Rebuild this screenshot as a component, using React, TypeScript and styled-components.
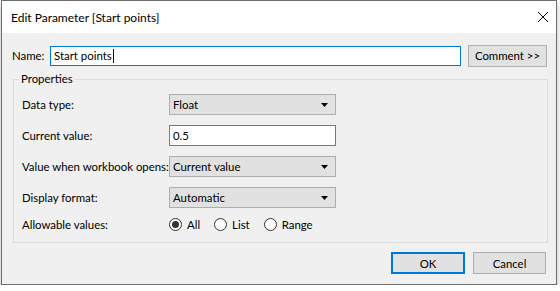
import React from "react";
import styled, { createGlobalStyle } from "styled-components";

const Global = createGlobalStyle`
  html, body { margin: 0; padding: 0; background: #ffffff; }
  body { font-family: Lato, "Noto Sans", sans-serif; font-size: 11.4px; line-height: 15px; color: #000; }
  * { box-sizing: border-box; }
`;

const Window = styled.div`
  margin-left: 1px;
  width: 556px;
  height: 285px;
  border: 1px solid #6e6e6e;
  background: #f0f0f0;
  box-shadow: 0 3px 6px rgba(0, 0, 0, 0.28);
  display: flex;
  flex-direction: column;
`;

const TitleBar = styled.div`
  height: 32px;
  background: #ffffff;
  display: flex;
  align-items: center;
  justify-content: space-between;
  padding: 0 7px 0 9px;
  font-size: 12px;
  flex: none;
`;

const CloseIcon = styled.svg`
  width: 12px;
  height: 12px;
  display: block;
`;

const Body = styled.div`
  flex: 1;
  display: flex;
  flex-direction: column;
  padding: 12px 9px 0 10px;
  white-space: nowrap;
`;

const NameRow = styled.div`
  display: flex;
  align-items: center;
  height: 21px;
`;

const NameLabel = styled.span`
  width: 38px;
  flex: none;
`;

const NameBox = styled.div`
  flex: 1;
  height: 20px;
  border: 1px solid #0078d7;
  background: #fff;
  display: flex;
  align-items: center;
  padding-left: 3px;
  margin-right: 7px;
`;

const Caret = styled.span`
  width: 1px;
  height: 14px;
  background: #000;
  margin-left: 1px;
`;

const Button = styled.div<{ $primary?: boolean; $w: number }>`
  width: ${(p) => p.$w}px;
  height: 22px;
  flex: none;
  display: flex;
  align-items: center;
  justify-content: center;
  background: #e1e1e1;
  border: ${(p) => (p.$primary ? "2px solid #0078d7" : "1px solid #adadad")};
`;

const Group = styled.fieldset`
  margin: 6px 0 0 1px;
  width: 535px;
  border: 1px solid #dcdcdc;
  padding: 8px 8px 7px 8px;
  display: flex;
  flex-direction: column;
  gap: 10px;
`;

const Legend = styled.legend`
  padding: 0 2px;
  margin-left: -3px;
  line-height: 14px;
`;

const Row = styled.div`
  display: flex;
  align-items: center;
  height: 21px;
`;

const RadioRow = styled(Row)`
  margin-top: -4px;
`;

const Label = styled.span`
  width: 147px;
  flex: none;
`;

const Select = styled.div`
  width: 167px;
  height: 21px;
  background: #e1e1e1;
  border: 1px solid #adadad;
  display: flex;
  align-items: center;
  justify-content: space-between;
  padding: 0 7px 0 3px;
`;

const Arrow = styled.svg`
  width: 7px;
  height: 4px;
  display: block;
`;

const TextBox = styled.div`
  width: 167px;
  height: 21px;
  background: #fff;
  border: 1px solid #7a7a7a;
  display: flex;
  align-items: center;
  padding-left: 3px;
`;

const RadioGroup = styled.div`
  display: flex;
  align-items: center;
  gap: 14px;
`;

const RadioItem = styled.div`
  display: flex;
  align-items: center;
  gap: 5px;
`;

const RadioCircle = styled.span<{ $checked?: boolean }>`
  width: 13px;
  height: 13px;
  border-radius: 50%;
  border: 1px solid #333;
  background: #fff;
  display: flex;
  align-items: center;
  justify-content: center;
  &::after {
    content: "";
    width: 7px;
    height: 7px;
    border-radius: 50%;
    background: ${(p) => (p.$checked ? "#333" : "transparent")};
  }
`;

const Footer = styled.div`
  display: flex;
  justify-content: flex-end;
  gap: 8px;
  padding-top: 9px;
  padding-right: 1px;
`;

const DropArrow = () => (
  <Arrow viewBox="0 0 7 4">
    <path d="M0 0H7L3.5 4Z" fill="#000" />
  </Arrow>
);

function Dropdown({ value }: { value: string }) {
  return (
    <Select>
      <span>{value}</span>
      <DropArrow />
    </Select>
  );
}

export default function App() {
  return (
    <>
      <Global />
      <Window>
        <TitleBar>
          <span>Edit Parameter [Start points]</span>
          <CloseIcon viewBox="0 0 12 12">
            <path d="M1 1L11 11M11 1L1 11" stroke="#000" strokeWidth="1" />
          </CloseIcon>
        </TitleBar>
        <Body>
          <NameRow>
            <NameLabel>Name:</NameLabel>
            <NameBox>
              <span>Start points</span>
              <Caret />
            </NameBox>
            <Button $w={79}>Comment &gt;&gt;</Button>
          </NameRow>
          <Group>
            <Legend>Properties</Legend>
            <Row>
              <Label>Data type:</Label>
              <Dropdown value="Float" />
            </Row>
            <Row>
              <Label>Current value:</Label>
              <TextBox>0.5</TextBox>
            </Row>
            <Row>
              <Label>Value when workbook opens:</Label>
              <Dropdown value="Current value" />
            </Row>
            <Row>
              <Label>Display format:</Label>
              <Dropdown value="Automatic" />
            </Row>
            <RadioRow>
              <Label>Allowable values:</Label>
              <RadioGroup>
                <RadioItem>
                  <RadioCircle $checked />
                  <span>All</span>
                </RadioItem>
                <RadioItem>
                  <RadioCircle />
                  <span>List</span>
                </RadioItem>
                <RadioItem>
                  <RadioCircle />
                  <span>Range</span>
                </RadioItem>
              </RadioGroup>
            </RadioRow>
          </Group>
          <Footer>
            <Button $primary $w={74}>OK</Button>
            <Button $w={73}>Cancel</Button>
          </Footer>
        </Body>
      </Window>
    </>
  );
}
